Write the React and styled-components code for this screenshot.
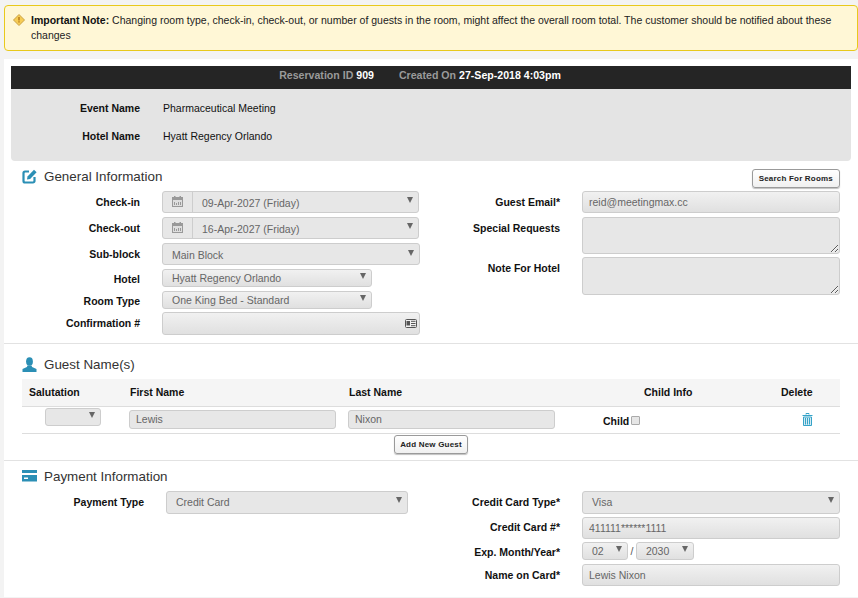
import React from "react";
import styled, { createGlobalStyle, css } from "styled-components";

const GlobalStyle = createGlobalStyle`
  * { box-sizing: border-box; }
  html, body { margin: 0; padding: 0; background: #f3f3f3; }
  body {
    font-family: "Liberation Sans", Arial, sans-serif;
    font-size: 10.5px;
    color: #111;
    overflow: hidden;
  }
`;

const Page = styled.div`
  height: 598px;
  padding: 5px 0 0 4px;
`;

const Alert = styled.div`
  height: 46px;
  padding: 7px 20px 0 26px;
  border: 1px solid #e8c91c;
  border-radius: 4px;
  background: #fff7d6;
  font-size: 10.5px;
  line-height: 15px;
  color: #222;
  position: relative;
  b { color: #111; }
`;

const AlertIcon = styled.svg`
  position: absolute;
  left: 8px;
  top: 8px;
  width: 12px;
  height: 12px;
`;

const Panel = styled.div`
  height: 538px;
  margin-top: 8px;
  padding-top: 7px;
  background: #fff;
`;

const Banner = styled.div`
  margin: 0 7px;
  height: 23px;
  padding: 0 22px 5px 0;
  background: #252525;
  color: #9a9a9a;
  font-size: 10.6px;
  font-weight: 700;
  display: flex;
  align-items: center;
  justify-content: center;
  gap: 25px;
  b { color: #fff; }
`;

const InfoBlock = styled.div`
  margin: 0 7px;
  height: 72px;
  padding-top: 12px;
  background: #e4e4e4;
  border-radius: 0 0 4px 4px;
`;

const InfoRow = styled.div`
  display: grid;
  grid-template-columns: 129px 1fr;
  column-gap: 23px;
  height: 28px;
  line-height: 15px;
`;

const InfoLabel = styled.div`
  font-weight: 700;
  text-align: right;
`;

const Section = styled.section`
  height: ${({ $height }) => $height}px;
  border-bottom: 1px solid #e2e2e2;
  padding: 0 18px;
  &:last-child { border-bottom: 0; }
`;

const SectionHead = styled.div`
  display: flex;
  align-items: center;
  justify-content: space-between;
  height: ${({ $height }) => $height}px;
  padding-top: ${({ $top }) => $top || 0}px;
`;

const Heading = styled.h2`
  margin: 0;
  display: flex;
  align-items: center;
  gap: 7px;
  font-size: 13.4px;
  font-weight: 400;
  color: #333;
  svg { flex: none; }
`;

const SoftButton = styled.button`
  height: 19px;
  padding: 0 5px;
  border: 1px solid #9a9a9a;
  border-radius: 3px;
  background: linear-gradient(#ffffff, #f0f0f0);
  box-shadow: 0 1px 1px rgba(0, 0, 0, 0.25);
  font-family: inherit;
  font-size: 8px;
  font-weight: 700;
  letter-spacing: 0.2px;
  color: #222;
`;

const SearchButton = styled(SoftButton)`
  align-self: flex-start;
  margin-top: 8px;
  padding: 0 6px;
`;

const FormColumns = styled.div`
  display: grid;
  grid-template-columns: ${({ $left }) => $left}px 1fr;
`;

const Stack = styled.div`
  display: flex;
  flex-direction: column;
`;

const Row = styled.div`
  display: grid;
  grid-template-columns: ${({ $label }) => $label}px ${({ $field }) => $field}px;
  column-gap: 22px;
  margin-bottom: ${({ $gap }) => ($gap === undefined ? 4 : $gap)}px;
`;

const Label = styled.label`
  font-weight: 700;
  text-align: right;
  line-height: 15px;
  padding-top: ${({ $top }) => ($top === undefined ? 4 : $top)}px;
  white-space: nowrap;
`;

const fieldLook = css`
  border: 1px solid #cdcdcd;
  border-radius: 3px;
  color: #666;
  font-family: inherit;
  font-size: 10.5px;
  background: ${({ $flat }) =>
    $flat ? "#e7e7e7" : "linear-gradient(#f1f1f1, #e0e0e0)"};
`;

const SelectBox = styled.div`
  ${fieldLook}
  display: flex;
  align-items: center;
  justify-content: space-between;
  height: ${({ $height }) => $height || 22}px;
  width: ${({ $width }) => ($width ? `${$width}px` : "100%")};
  padding: ${({ $drop }) => ($drop ? 1 : 0)}px 5px ${({ $lift }) => ($lift ? 1 : 0)}px 9px;
`;

const Arrow = styled.span`
  width: 0;
  height: 0;
  margin-top: -4px;
  border-left: 3.5px solid transparent;
  border-right: 3.5px solid transparent;
  border-top: 6px solid #666;
`;

const DateBox = styled.div`
  ${fieldLook}
  display: flex;
  align-items: center;
  height: 22px;
  width: 257px;
  padding-right: 5px;
`;

const DateAddon = styled.span`
  flex: none;
  width: 30px;
  height: 100%;
  border-right: 1px solid #cdcdcd;
  display: flex;
  align-items: center;
  justify-content: center;
  padding-bottom: 1px;
`;

const DateValue = styled.span`
  flex: 1;
  padding: 1px 0 0 9px;
`;

const TextInput = styled.input`
  ${fieldLook}
  display: block;
  width: ${({ $width }) => ($width ? `${$width}px` : "100%")};
  height: ${({ $height }) => $height || 22}px;
  padding: 0 6px ${({ $lift }) => ($lift ? 2 : 0)}px;
  outline: 0;
`;

const Notes = styled.textarea`
  ${fieldLook}
  display: block;
  width: 100%;
  height: ${({ $height }) => $height}px;
  padding: 4px 6px;
  resize: vertical;
  outline: 0;
`;

const IconField = styled.div`
  ${fieldLook}
  display: flex;
  align-items: center;
  justify-content: flex-end;
  height: 23px;
  padding-right: 2px;
`;

const GuestGrid = styled.div`
  display: grid;
  grid-template-columns: 107px 219px 239px 163px 89px;
  align-items: center;
`;

const GuestHead = styled(GuestGrid)`
  height: 28px;
  padding-bottom: 2px;
  background: #f5f5f5;
  border-bottom: 1px solid #ddd;
  font-weight: 700;
`;

const GuestRow = styled(GuestGrid)`
  height: 27px;
  padding-bottom: 1px;
  border-bottom: 1px solid #ddd;
`;

const Cell = styled.div`
  padding-left: ${({ $indent }) => $indent || 0}px;
`;

const SalutationCell = styled(Cell)`
  align-self: start;
  padding-top: 1px;
`;

const TrashCell = styled(Cell)`
  display: flex;
  padding-bottom: 1px;
`;

const ChildCheck = styled.label`
  display: flex;
  align-items: center;
  gap: 2px;
  font-weight: 700;
  padding-top: 3px;
`;

const Box = styled.span`
  width: 9px;
  height: 9px;
  margin-top: -1px;
  border: 1px solid #aaa;
  border-radius: 1px;
  background: #e6e6e6;
`;

const AddRow = styled.div`
  display: flex;
  justify-content: center;
  padding-top: 1px;
`;

const ExpiryRow = styled.div`
  display: flex;
  align-items: center;
  gap: 2.5px;
  color: #555;
`;

const BLUE = "#2b8fb5";
const TRASH = "#35a3c8";

const EditIcon = () => (
  <svg width="15" height="15" viewBox="0 0 15 15">
    <path d="M7 2.500H3A1.500 1.500 0 0 0 1.500 4v8A1.500 1.500 0 0 0 3 13.500h8A1.500 1.500 0 0 0 12.500 12V8" fill="none" stroke={BLUE} strokeWidth="2.200" />
    <path d="M5.500 7.500 12 .8l2.600 2.500L8.100 10 5 10.600Z" fill={BLUE} />
  </svg>
);

const UserIcon = () => (
  <svg width="15" height="15" viewBox="0 0 15 15">
    <ellipse cx="7.500" cy="4.500" rx="3.400" ry="4.300" fill={BLUE} />
    <path d="M5.500 8.500h4l.6 1.600 4.400 2V15H.5v-2.900l4.400-2Z" fill={BLUE} />
  </svg>
);

const CardIcon = () => (
  <svg width="15" height="12" viewBox="0 0 15 12">
    <rect x="0" y="0" width="15" height="3" fill={BLUE} />
    <path d="M0 5h15v6.500H0Z" fill={BLUE} />
    <rect x="2" y="7.500" width="4" height="1.500" fill="#fff" />
  </svg>
);

const CalendarIcon = () => (
  <svg width="12" height="11" viewBox="0 0 12 11">
    <rect x="0.500" y="1.500" width="10" height="9" fill="#dedede" stroke="#999" />
    <rect x="0.500" y="1.500" width="10" height="2.500" fill="#999" />
    <rect x="2" y="0" width="1.500" height="2" fill="#999" />
    <rect x="7.500" y="0" width="1.500" height="2" fill="#999" />
    <path d="M2 6h1v3H2Zm2 1h1v2H4Zm2-1h1v3H6Zm2 0h1v3H8Z" fill="#999" />
  </svg>
);

const IdIcon = () => (
  <svg width="12" height="9" viewBox="0 0 12 9">
    <rect x="0.500" y="0.500" width="11" height="8" rx="1" fill="#f2f2f2" stroke="#555" />
    <rect x="1.500" y="2" width="3.500" height="4.500" fill="#555" />
    <path d="M6 2.300h4.500M6 4.500h4.500M6 6.700h4.500" stroke="#555" />
  </svg>
);

const TrashIcon = () => (
  <svg width="11" height="13" viewBox="0 0 11 13">
    <path d="M4 1.500V.5h3v1M0.500 2.500h10" fill="none" stroke={TRASH} />
    <path d="M1.500 4h8v8.500h-8Z" fill="#d4ebf3" stroke={TRASH} />
    <path d="M3.500 5v6.500M5.500 5v6.500M7.500 5v6.500" stroke={TRASH} />
  </svg>
);

const Select = ({ value, ...rest }) => (
  <SelectBox {...rest}>
    <span>{value}</span>
    <Arrow />
  </SelectBox>
);

const DateField = ({ value }) => (
  <DateBox $flat>
    <DateAddon>
      <CalendarIcon />
    </DateAddon>
    <DateValue>{value}</DateValue>
    <Arrow />
  </DateBox>
);

export default function App() {
  return (
    <Page>
      <GlobalStyle />
      <Alert>
        <AlertIcon viewBox="0 0 12 12">
          <path d="M6 .5 11.500 6 6 11.500 .5 6Z" fill="#f6cc55" stroke="#c9a145" />
          <path d="M5.400 3h1.200v3.500H5.400Zm0 4.200h1.200v1.300H5.400Z" fill="#a8660a" />
        </AlertIcon>
        <div>
          <b>Important Note:</b> Changing room type, check-in, check-out, or number of guests in the room, might affect the overall room total. The customer should be notified about these changes
        </div>
      </Alert>
      <Panel>
        <Banner>
          <span>Reservation ID <b>909</b></span>
          <span>Created On <b>27-Sep-2018 4:03pm</b></span>
        </Banner>
        <InfoBlock>
          <InfoRow>
            <InfoLabel>Event Name</InfoLabel>
            <div>Pharmaceutical Meeting</div>
          </InfoRow>
          <InfoRow>
            <InfoLabel>Hotel Name</InfoLabel>
            <div>Hyatt Regency Orlando</div>
          </InfoRow>
        </InfoBlock>

        <Section $height={183}>
          <SectionHead $height={30}>
            <Heading><EditIcon />General Information</Heading>
            <SearchButton>Search For Rooms</SearchButton>
          </SectionHead>
          <FormColumns $left={440}>
            <Stack>
              <Row $label={118} $field={258}>
                <Label>Check-in</Label>
                <DateField value="09-Apr-2027 (Friday)" />
              </Row>
              <Row $label={118} $field={258}>
                <Label>Check-out</Label>
                <DateField value="16-Apr-2027 (Friday)" />
              </Row>
              <Row $label={118} $field={258}>
                <Label>Sub-block</Label>
                <Select $flat $drop value="Main Block" />
              </Row>
              <Row $label={118} $field={258}>
                <Label $top={3}>Hotel</Label>
                <Select $height={18} $width={210} value="Hyatt Regency Orlando" />
              </Row>
              <Row $label={118} $field={258} $gap={3}>
                <Label $top={3}>Room Type</Label>
                <Select $height={18} $width={210} value="One King Bed - Standard" />
              </Row>
              <Row $label={118} $field={258}>
                <Label>Confirmation #</Label>
                <IconField><IdIcon /></IconField>
              </Row>
            </Stack>
            <Stack>
              <Row $label={98} $field={258}>
                <Label>Guest Email*</Label>
                <TextInput readOnly value="reid@meetingmax.cc" />
              </Row>
              <Row $label={98} $field={258} $gap={3}>
                <Label>Special Requests</Label>
                <Notes readOnly $flat $height={37} />
              </Row>
              <Row $label={98} $field={258}>
                <Label>Note For Hotel</Label>
                <Notes readOnly $flat $height={38} />
              </Row>
            </Stack>
          </FormColumns>
        </Section>

        <Section $height={117}>
          <SectionHead $height={35} $top={5}>
            <Heading><UserIcon />Guest Name(s)</Heading>
          </SectionHead>
          <GuestHead>
            <Cell $indent={7}>Salutation</Cell>
            <Cell $indent={1}>First Name</Cell>
            <Cell $indent={1}>Last Name</Cell>
            <Cell $indent={57}>Child Info</Cell>
            <Cell $indent={31}>Delete</Cell>
          </GuestHead>
          <GuestRow>
            <SalutationCell $indent={23}>
              <Select $flat $height={18} $width={56} value="" />
            </SalutationCell>
            <Cell>
              <TextInput readOnly $flat $lift $height={19} $width={207} value="Lewis" />
            </Cell>
            <Cell>
              <TextInput readOnly $flat $lift $height={19} $width={207} value="Nixon" />
            </Cell>
            <Cell $indent={16}>
              <ChildCheck>Child<Box /></ChildCheck>
            </Cell>
            <TrashCell $indent={52}><TrashIcon /></TrashCell>
          </GuestRow>
          <AddRow>
            <SoftButton>Add New Guest</SoftButton>
          </AddRow>
        </Section>

        <Section>
          <SectionHead $height={30}>
            <Heading><CardIcon />Payment Information</Heading>
          </SectionHead>
          <FormColumns $left={418}>
            <Stack>
              <Row $label={122} $field={242}>
                <Label>Payment Type</Label>
                <Select $flat $lift $height={23} value="Credit Card" />
              </Row>
            </Stack>
            <Stack>
              <Row $label={120} $field={258} $gap={3}>
                <Label>Credit Card Type*</Label>
                <Select $flat $lift $height={23} value="Visa" />
              </Row>
              <Row $label={120} $field={258} $gap={3}>
                <Label $top={3}>Credit Card #*</Label>
                <TextInput readOnly value="411111******1111" />
              </Row>
              <Row $label={120} $field={258}>
                <Label $top={3}>Exp. Month/Year*</Label>
                <ExpiryRow>
                  <Select $height={18} $width={46} value="02" />
                  /
                  <Select $height={18} $width={58} value="2030" />
                </ExpiryRow>
              </Row>
              <Row $label={120} $field={258}>
                <Label>Name on Card*</Label>
                <TextInput readOnly value="Lewis Nixon" />
              </Row>
            </Stack>
          </FormColumns>
        </Section>
      </Panel>
    </Page>
  );
}
